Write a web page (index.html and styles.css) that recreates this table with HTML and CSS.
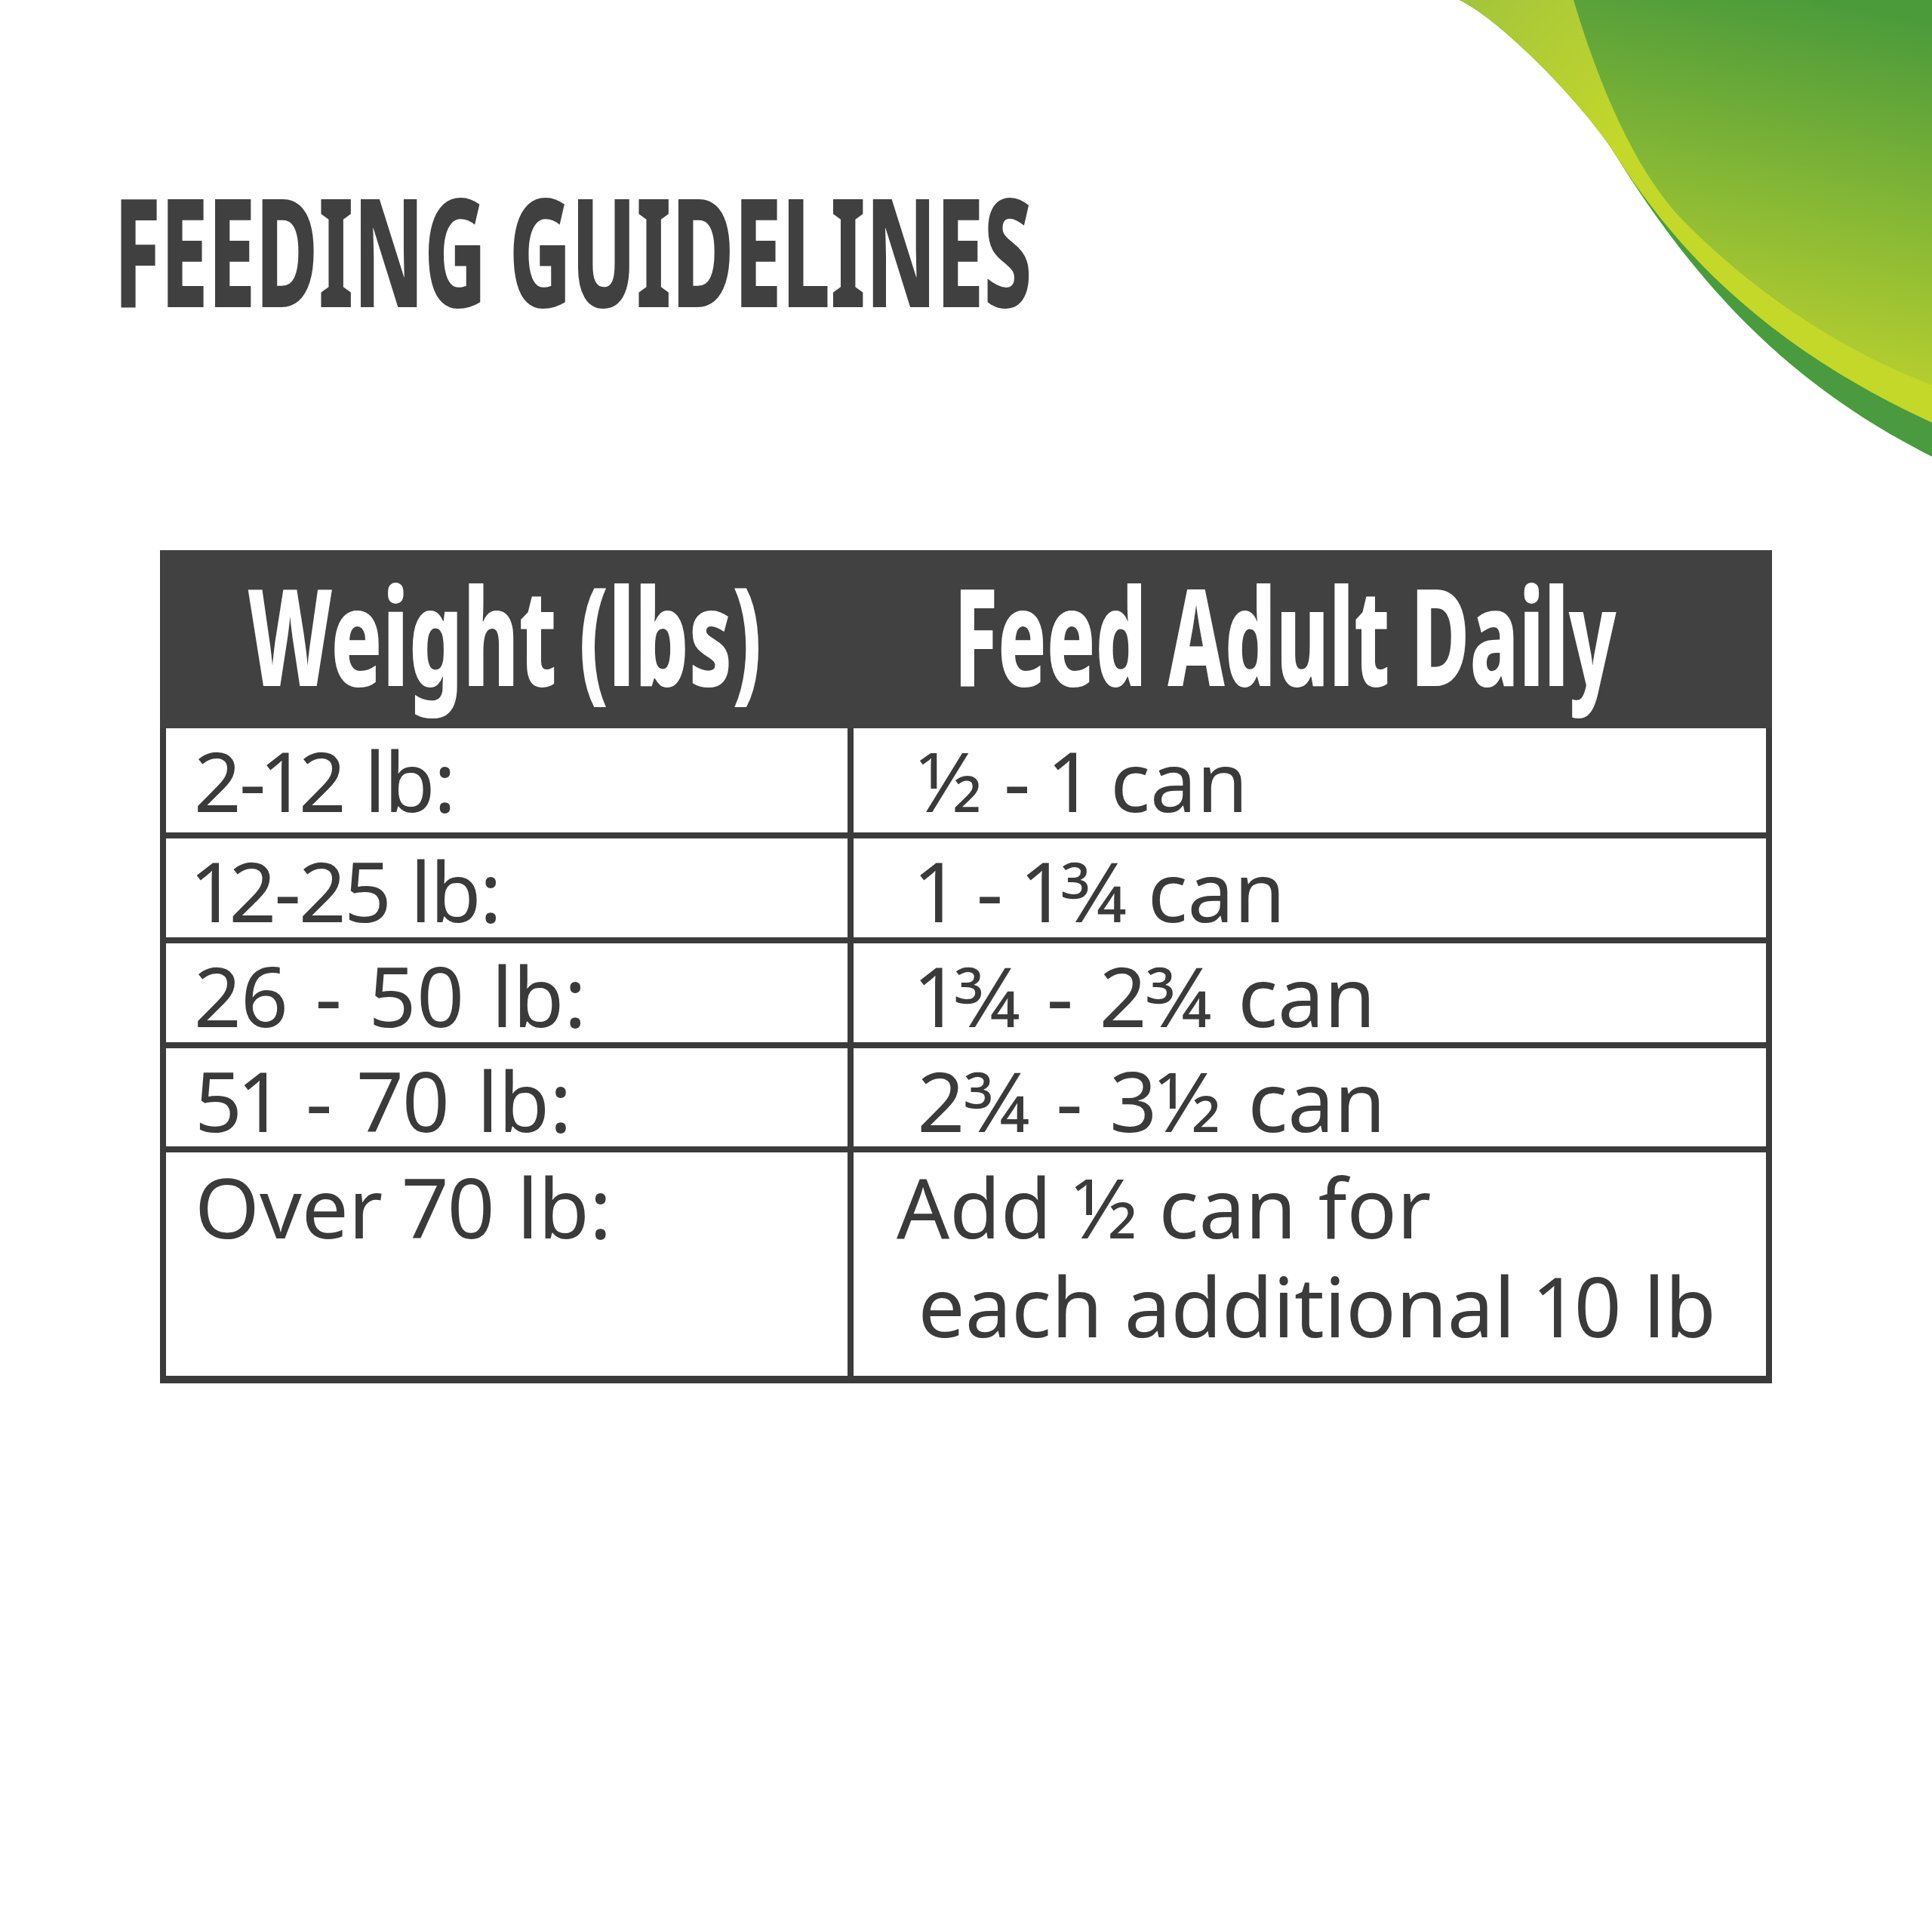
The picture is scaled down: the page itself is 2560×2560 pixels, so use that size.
FILE: index.html
```html
<!DOCTYPE html>
<html lang="en">
<head>
<meta charset="utf-8">
<title>Feeding Guidelines</title>
<link rel="stylesheet" href="styles.css">
</head>
<body>
<svg class="swoosh" viewBox="1900 0 660 620" width="660" height="620" aria-hidden="true">
  <defs>
    <linearGradient id="gMain" gradientUnits="userSpaceOnUse" x1="2400" y1="0" x2="2300" y2="480">
      <stop offset="0" stop-color="#4c9b3b"/>
      <stop offset="0.18" stop-color="#5fa439"/>
      <stop offset="0.55" stop-color="#88b935"/>
      <stop offset="0.85" stop-color="#a9c831"/>
      <stop offset="1" stop-color="#b9d02e"/>
    </linearGradient>
    <linearGradient id="gLime" gradientUnits="userSpaceOnUse" x1="1934" y1="0" x2="2140" y2="200">
      <stop offset="0" stop-color="#a3c43c"/>
      <stop offset="1" stop-color="#c4d82a"/>
    </linearGradient>
  </defs>
  <path fill="#4a9b40" d="M1934,0 C1994,30 2096,138 2136,198 C2230,350 2350,500 2560,605 L2560,0 Z"/>
  <path fill="url(#gLime)" d="M1934,0 C1994,30 2096,138 2136,198 C2228,346 2356,466 2560,560 L2560,0 Z"/>
  <path fill="url(#gMain)" d="M2085,0 C2115,100 2162,222 2230,292 C2320,384 2440,466 2560,510 L2560,0 Z"/>
</svg>
<main class="page">
  <h1 class="title"><span class="title-text">FEEDING GUIDELINES</span></h1>
  <div class="table">
    <div class="thead">
      <div class="th th-left"><span class="th-text th-weight">Weight (lbs)</span></div>
      <div class="th th-right"><span class="th-text th-feed">Feed Adult Daily</span></div>
    </div>
    <div class="row r1">
      <div class="c1 tight">2-12 lb:</div>
      <div class="c2">&nbsp;½ - 1 can</div>
    </div>
    <div class="row r2">
      <div class="c1 tight">12-25 lb:</div>
      <div class="c2">&nbsp;1 - 1¾ can</div>
    </div>
    <div class="row r3">
      <div class="c1"><span class="spaced">26 - 50 lb:</span></div>
      <div class="c2">&nbsp;<span class="spaced">1¾ - 2¾ can</span></div>
    </div>
    <div class="row r4">
      <div class="c1"><span class="spaced">51 - 70 lb:</span></div>
      <div class="c2">&nbsp;<span class="spaced">2¾ - 3½ can</span></div>
    </div>
    <div class="row r5">
      <div class="c1">Over 70 lb:</div>
      <div class="c2">
        <div class="line">Add ½ can for</div>
        <div class="line">&nbsp;each additional 10 lb</div>
      </div>
    </div>
  </div>
</main>
</body>
</html>
```

FILE: styles.css
```css
html, body {
  margin: 0;
  padding: 0;
}

body {
  width: 2560px;
  height: 2560px;
  background: #ffffff;
  position: relative;
  overflow: hidden;
  font-family: "Noto Sans", "Open Sans", "Liberation Sans", sans-serif;
}

.swoosh {
  position: absolute;
  top: 0;
  right: 0;
  display: block;
}

.page {
  padding-top: 231px;
}

/* Condensed look: set the width by font-size, then stretch vertically from the baseline */
.title {
  margin: 0 0 0 151px;
  font-size: 200px;
  line-height: 200px;
  font-weight: 800;
  color: #404040;
  white-space: nowrap;
}

.title-text {
  display: inline-block;
  font-size: 113.4px;
  line-height: 1;
  transform: scaleY(1.7637);
  transform-origin: 0 0.888em;
}

.table {
  margin: 298px 0 0 212px;
  width: 2136px;
  box-sizing: border-box;
  border-left: 8px solid #3b3b3b;
  border-right: 8px solid #3b3b3b;
  border-bottom: 10px solid #3b3b3b;
}

.thead {
  display: grid;
  grid-template-columns: 911px 1fr;
  height: 236px;
  margin: 0 -8px;
  background: #414141;
}

.th {
  min-width: 0;
  color: #ffffff;
  font-weight: 800;
  font-size: 179px;
  line-height: 224px;
  white-space: nowrap;
}

.th-left {
  padding-left: 116px;
}

.th-right {
  padding-left: 141px;
}

.th-text {
  display: inline-block;
  line-height: 1;
  transform-origin: 0 0.888em;
}

.th-weight {
  font-size: 112.6px;
  transform: scaleY(1.5898);
}

.th-feed {
  font-size: 106.7px;
  transform: scaleY(1.6779);
}

.row {
  display: grid;
  grid-template-columns: 903px 1fr;
  box-sizing: border-box;
  border-top: 8px solid #3b3b3b;
  font-size: 110px;
  line-height: 131px;
  color: #3a3a3a;
  white-space: nowrap;
  font-variant-numeric: proportional-nums;
}

.row.r1 {
  border-top: 0;
  height: 138px;
}

.r2 { height: 139px; }
.r3 { height: 139px; }
.r4 { height: 138px; }
.r5 { height: 304px; }

.c1 {
  padding: 3px 0 0 38px;
}

.c2 {
  border-left: 8px solid #3b3b3b;
  padding: 3px 0 0 57px;
}

.line {
  height: 131px;
}

.tight {
  letter-spacing: -2px;
}

.spaced {
  word-spacing: 7px;
}

.r5 .c1,
.r5 .c2 {
  padding-top: 6px;
}
```
